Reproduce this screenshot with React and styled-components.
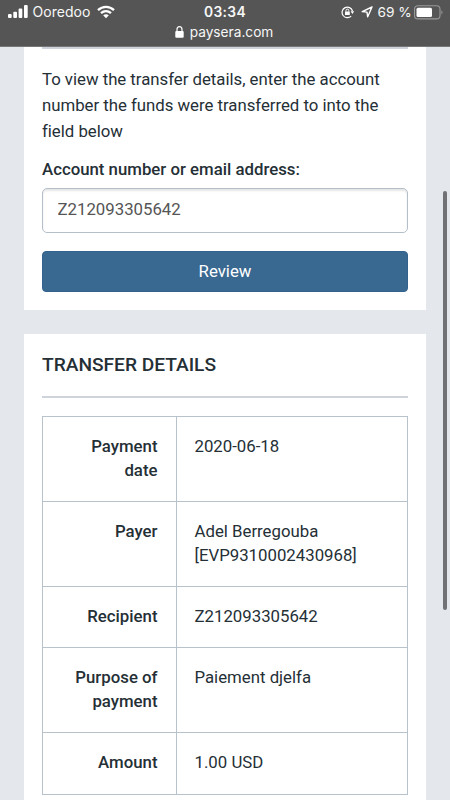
import React from 'react';
import styled, { createGlobalStyle } from 'styled-components';

const GlobalStyle = createGlobalStyle`
  *, *::before, *::after { box-sizing: border-box; }
  html, body { margin: 0; height: 100%; overflow: hidden; }
  body {
    background: #e4e7ec;
    color: #252f36;
    font-family: Roboto, "Liberation Sans", sans-serif;
    font-size: 16.8px;
    -webkit-font-smoothing: antialiased;
  }
`;

const Screen = styled.div`
  position: relative;
  display: flex;
  flex-direction: column;
  width: 450px;
  height: 800px;
  overflow: hidden;
`;

const BrowserHeader = styled.header`
  flex: none;
  height: 47px;
  background: #555555;
  border-bottom: 1px solid #777777;
  color: #f7f7f7;
  font-family: Inter, "Liberation Sans", sans-serif;
  font-size: 14px;
  line-height: 20px;
`;

const StatusBar = styled.div`
  display: grid;
  grid-template-columns: 150px 150px 150px;
  height: 22px;
  padding-top: 2px;
`;

const Carrier = styled.div`
  display: flex;
  align-items: center;
  padding-left: 8px;
`;

const CarrierName = styled.span`
  width: 59px;
  margin-left: 4.5px;
  margin-right: 5.5px;
  white-space: nowrap;
  letter-spacing: 0.05px;
`;

const Clock = styled.div`
  text-align: center;
  font-weight: 600;
  font-size: 13.8px;
  letter-spacing: 0.35px;
`;

const Indicators = styled.div`
  display: flex;
  align-items: center;
  padding-left: 41px;
`;

const BatteryText = styled.span`
  width: 36px;
  margin-left: 4.5px;
  white-space: nowrap;
  font-size: 13.7px;
`;

const AddressBar = styled.div`
  display: flex;
  align-items: center;
  justify-content: center;
  gap: 6px;
  height: 20px;
  padding-right: 2px;
  font-size: 13.7px;
`;

const Page = styled.main`
  display: flex;
  flex-direction: column;
  gap: 24px;
  padding: 0 24px;
`;

const Card = styled.section`
  flex: none;
  background: #ffffff;
  padding: 0 18px 18px;
`;

const Divider = styled.hr`
  height: 2px;
  margin: 0;
  border: 0;
  background: #cfd4dc;
`;

const Intro = styled.p`
  margin: 16.6px 0 0;
  line-height: 26.4px;
  letter-spacing: -0.02px;
`;

const Label = styled.label`
  display: block;
  margin-top: 12px;
  line-height: 24px;
  font-weight: 500;
`;

const AccountInput = styled.input`
  display: block;
  width: 100%;
  height: 45px;
  margin-top: 7.4px;
  padding: 0 14.5px 3px;
  border: 1px solid #b5bfca;
  border-radius: 5px;
  background: #ffffff;
  box-shadow: inset 0 2px 2px rgba(0, 0, 0, 0.1);
  color: #555555;
  font: inherit;
  outline: none;
`;

const ReviewButton = styled.button`
  display: block;
  width: 100%;
  height: 41px;
  margin-top: 18px;
  padding: 0 0 2px;
  border: 1px solid #34628e;
  border-radius: 4px;
  background: #396891;
  color: #ffffff;
  font: inherit;
`;

const Title = styled.h2`
  margin: 0 0 19px;
  padding-top: 19px;
  font-size: 19.2px;
  line-height: 24px;
  font-weight: 500;
  letter-spacing: -0.03px;
`;

const Details = styled.dl`
  margin: 18px 0 0;
  border: 1px solid #b7c2cb;
`;

const DetailRow = styled.div`
  display: grid;
  grid-template-columns: 133.5px 1fr;
  height: ${({ $height }) => $height}px;

  & + & { border-top: 1px solid #b7c2cb; }
`;

const Term = styled.dt`
  padding: 17px 18px 0 30px;
  border-right: 1px solid #b7c2cb;
  text-align: right;
  line-height: 24px;
  font-weight: 500;
`;

const Value = styled.dd`
  margin: 0;
  padding: 17px 18px 0;
  line-height: 24px;
  white-space: pre-line;
`;

const Scrollbar = styled.div`
  position: absolute;
  top: 191px;
  left: 442.7px;
  width: 4px;
  height: 419px;
  border-radius: 2px;
  background: #707275;
`;

const rows = [
  { term: 'Payment date', value: '2020-06-18', height: 84 },
  { term: 'Payer', value: 'Adel Berregouba\n[EVP9310002430968]', height: 85 },
  { term: 'Recipient', value: 'Z212093305642', height: 61 },
  { term: 'Purpose of payment', value: 'Paiement djelfa', height: 85 },
  { term: 'Amount', value: '1.00 USD', height: 62 },
];

const SignalIcon = () => (
  <svg width="20" height="14" viewBox="0 0 20 14" fill="#fff">
    <rect x="0" y="9" width="3.7" height="4" rx="1" />
    <rect x="5.3" y="6.7" width="3.7" height="6.3" rx="1" />
    <rect x="10.6" y="3.5" width="3.7" height="9.5" rx="1" />
    <rect x="16" y="0" width="3.7" height="13" rx="1" />
  </svg>
);

const WifiIcon = () => (
  <svg width="18" height="14" viewBox="0 0 18 14" fill="none" stroke="#fff" strokeWidth="2.3">
    <path d="M1 5.1C5.6.8 12.4.8 17 5.1" />
    <path d="M4 8.2C6.9 5.6 11.1 5.6 14 8.2" />
    <path d="M6.2 10.2C7.8 8.8 10.2 8.8 11.8 10.2L9 13.2Z" fill="#fff" stroke="none" />
  </svg>
);

const RotationLockIcon = () => (
  <svg width="14" height="14" viewBox="0 0 14 14">
    <path d="M10.2 11.1A5.3 5.3 0 1 1 11.5 6" fill="none" stroke="#fff" strokeWidth="1.2" />
    <path d="M9.6 6.2H13.2L11.4 9Z" fill="#fff" />
    <rect x="4" y="6.4" width="4.8" height="3.6" rx=".5" fill="#fff" />
    <path d="M5 6.6V5.4Q5 4.1 6.4 4.1T7.8 5.4V6.6" fill="none" stroke="#fff" />
  </svg>
);

const LocationIcon = () => (
  <svg width="12" height="12" viewBox="0 0 12 12" fill="none" stroke="#fff" strokeWidth="1.4" strokeLinejoin="round">
    <path d="M11 1L1.2 5.6L6 6.1L6.7 10.8Z" />
  </svg>
);

const BatteryIcon = () => (
  <svg width="30" height="15" viewBox="0 0 30 15">
    <rect x=".5" y=".7" width="25.5" height="13.2" rx="3.5" fill="none" stroke="#999" strokeWidth="1.1" />
    <rect x="2.5" y="2.7" width="15.5" height="9.2" rx="1.5" fill="#fff" />
    <path d="M27.4 5.2Q29.6 7.3 27.4 9.4Z" fill="#999" />
  </svg>
);

const LockIcon = () => (
  <svg width="9" height="12" viewBox="0 0 9 12">
    <rect x=".3" y="5" width="8.4" height="6.8" rx="1" fill="#fff" />
    <path d="M2 5.5V3.3Q2 .7 4.5.7T7 3.3V5.5" fill="none" stroke="#fff" strokeWidth="1.2" />
  </svg>
);

const Spacer = styled.span`
  width: 6px;
`;

export default function App() {
  return (
    <>
      <GlobalStyle />
      <Screen>
        <BrowserHeader>
          <StatusBar>
            <Carrier>
              <SignalIcon />
              <CarrierName>Ooredoo</CarrierName>
              <WifiIcon />
            </Carrier>
            <Clock>03:34</Clock>
            <Indicators>
              <RotationLockIcon />
              <Spacer />
              <LocationIcon />
              <BatteryText>69 %</BatteryText>
              <BatteryIcon />
            </Indicators>
          </StatusBar>
          <AddressBar>
            <LockIcon />
            <span>paysera.com</span>
          </AddressBar>
        </BrowserHeader>
        <Page>
          <Card>
            <Divider />
            <Intro>
              To view the transfer details, enter the account number the funds were transferred to into the field below
            </Intro>
            <Label htmlFor="account">Account number or email address:</Label>
            <AccountInput id="account" defaultValue="Z212093305642" />
            <ReviewButton type="button">Review</ReviewButton>
          </Card>
          <Card>
            <Title>TRANSFER DETAILS</Title>
            <Divider />
            <Details>
              {rows.map(({ term, value, height }) => (
                <DetailRow key={term} $height={height}>
                  <Term>{term}</Term>
                  <Value>{value}</Value>
                </DetailRow>
              ))}
            </Details>
          </Card>
        </Page>
        <Scrollbar />
      </Screen>
    </>
  );
}
